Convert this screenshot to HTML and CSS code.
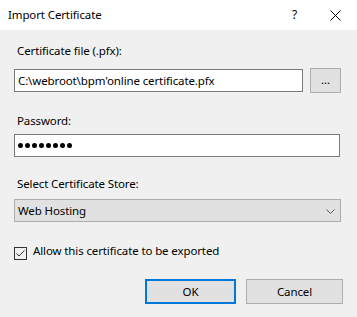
FILE: index.html
```html
<!DOCTYPE html>
<html>
<head>
<meta charset="utf-8">
<link rel="stylesheet" href="styles.css">
</head>
<body>
<div class="window">
  <div class="titlebar">
    <span class="title">Import Certificate</span>
    <span class="help">?</span>
    <span class="close">
      <svg width="11" height="11" viewBox="0 0 11 11"><path d="M0.5 0.5 L10.5 10.5 M10.5 0.5 L0.5 10.5" stroke="#000" stroke-width="1" fill="none"/></svg>
    </span>
  </div>
  <div class="content">
    <div class="label l1">Certificate file (.pfx):</div>
    <div class="file-row">
      <div class="input file">C:\webroot\bpm'online certificate.pfx</div>
      <div class="btn browse">...</div>
    </div>
    <div class="label l2">Password:</div>
    <div class="input pw">
      <span class="dot"></span><span class="dot"></span><span class="dot"></span><span class="dot"></span><span class="dot"></span><span class="dot"></span><span class="dot"></span><span class="dot"></span>
    </div>
    <div class="label l3">Select Certificate Store:</div>
    <div class="select">
      <span>Web Hosting</span>
      <svg class="chev" width="9" height="5" viewBox="0 0 9 5"><polyline points="0.5,0.5 4.5,4.5 8.5,0.5" stroke="#5a5a5a" stroke-width="1" fill="none"/></svg>
    </div>
    <div class="check">
      <span class="box"><svg width="11" height="11" viewBox="0 0 11 11"><polyline points="1.5,5.5 4,8 9.5,2.5" stroke="#333" stroke-width="1" fill="none"/></svg></span>
      <span class="check-label">Allow this certificate to be exported</span>
    </div>
    <div class="actions">
      <div class="btn ok">OK</div>
      <div class="btn cancel">Cancel</div>
    </div>
  </div>
</div>
</body>
</html>
```
FILE: styles.css
```css
html, body {
  margin: 0;
  padding: 0;
}
body {
  width: 357px;
  height: 317px;
  overflow: hidden;
  font-family: "Segoe UI", "Noto Sans", sans-serif;
  font-size: 11.5px;
  letter-spacing: -0.12px;
  line-height: 16px;
  color: #000;
}
.window {
  width: 357px;
  height: 317px;
  background: #f0f0f0;
}
.titlebar {
  height: 30px;
  background: #fff;
  display: flex;
  align-items: center;
  padding-left: 8px;
  box-sizing: border-box;
}
.title {
  flex: 1;
  margin-top: -1px;
}
.help {
  width: 10px;
  margin-right: 28px;
  margin-top: -1px;
  font-size: 12px;
}
.close {
  display: flex;
  margin-right: 16px;
  margin-top: 1px;
}
.content {
  padding: 13px 16px 0 14px;
}
.label {
  height: 16px;
  padding-left: 3px;
}
.file-row {
  margin-top: 9px;
  height: 25px;
  display: flex;
  align-items: center;
  gap: 7px;
}
.input {
  box-sizing: border-box;
  height: 23px;
  background: #fff;
  border: 1px solid #7a7a7a;
  padding-left: 3px;
  display: flex;
  align-items: center;
}
.input.file {
  width: 289px;
}
.btn {
  box-sizing: border-box;
  height: 25px;
  background: #e1e1e1;
  border: 1px solid #adadad;
  display: flex;
  align-items: center;
  justify-content: center;
}
.browse {
  width: 31px;
  padding-bottom: 2px;
}
.l2 {
  margin-top: 20px;
}
.pw {
  margin-top: 5px;
  width: 326px;
  gap: 2px;
}
.dot {
  width: 5px;
  height: 5px;
  border-radius: 50%;
  background: #000;
}
.l3 {
  margin-top: 19px;
}
.select {
  margin-top: 7px;
  box-sizing: border-box;
  height: 23px;
  width: 327px;
  background: #e1e1e1;
  border: 1px solid #adadad;
  display: flex;
  align-items: center;
  justify-content: space-between;
  padding: 0 5px 0 3px;
}
.chev {
  margin-top: 1px;
}
.check {
  margin-top: 21px;
  height: 16px;
  display: flex;
  align-items: flex-start;
  gap: 6px;
}
.box {
  box-sizing: border-box;
  width: 13px;
  height: 13px;
  margin-top: 4px;
  border: 1px solid #333;
  display: flex;
}
.actions {
  margin-top: 20px;
  margin-right: -2px;
  display: flex;
  justify-content: flex-end;
  gap: 10px;
}
.ok {
  width: 91px;
  border: 2px solid #0078d7;
}
.cancel {
  width: 97px;
}
```
